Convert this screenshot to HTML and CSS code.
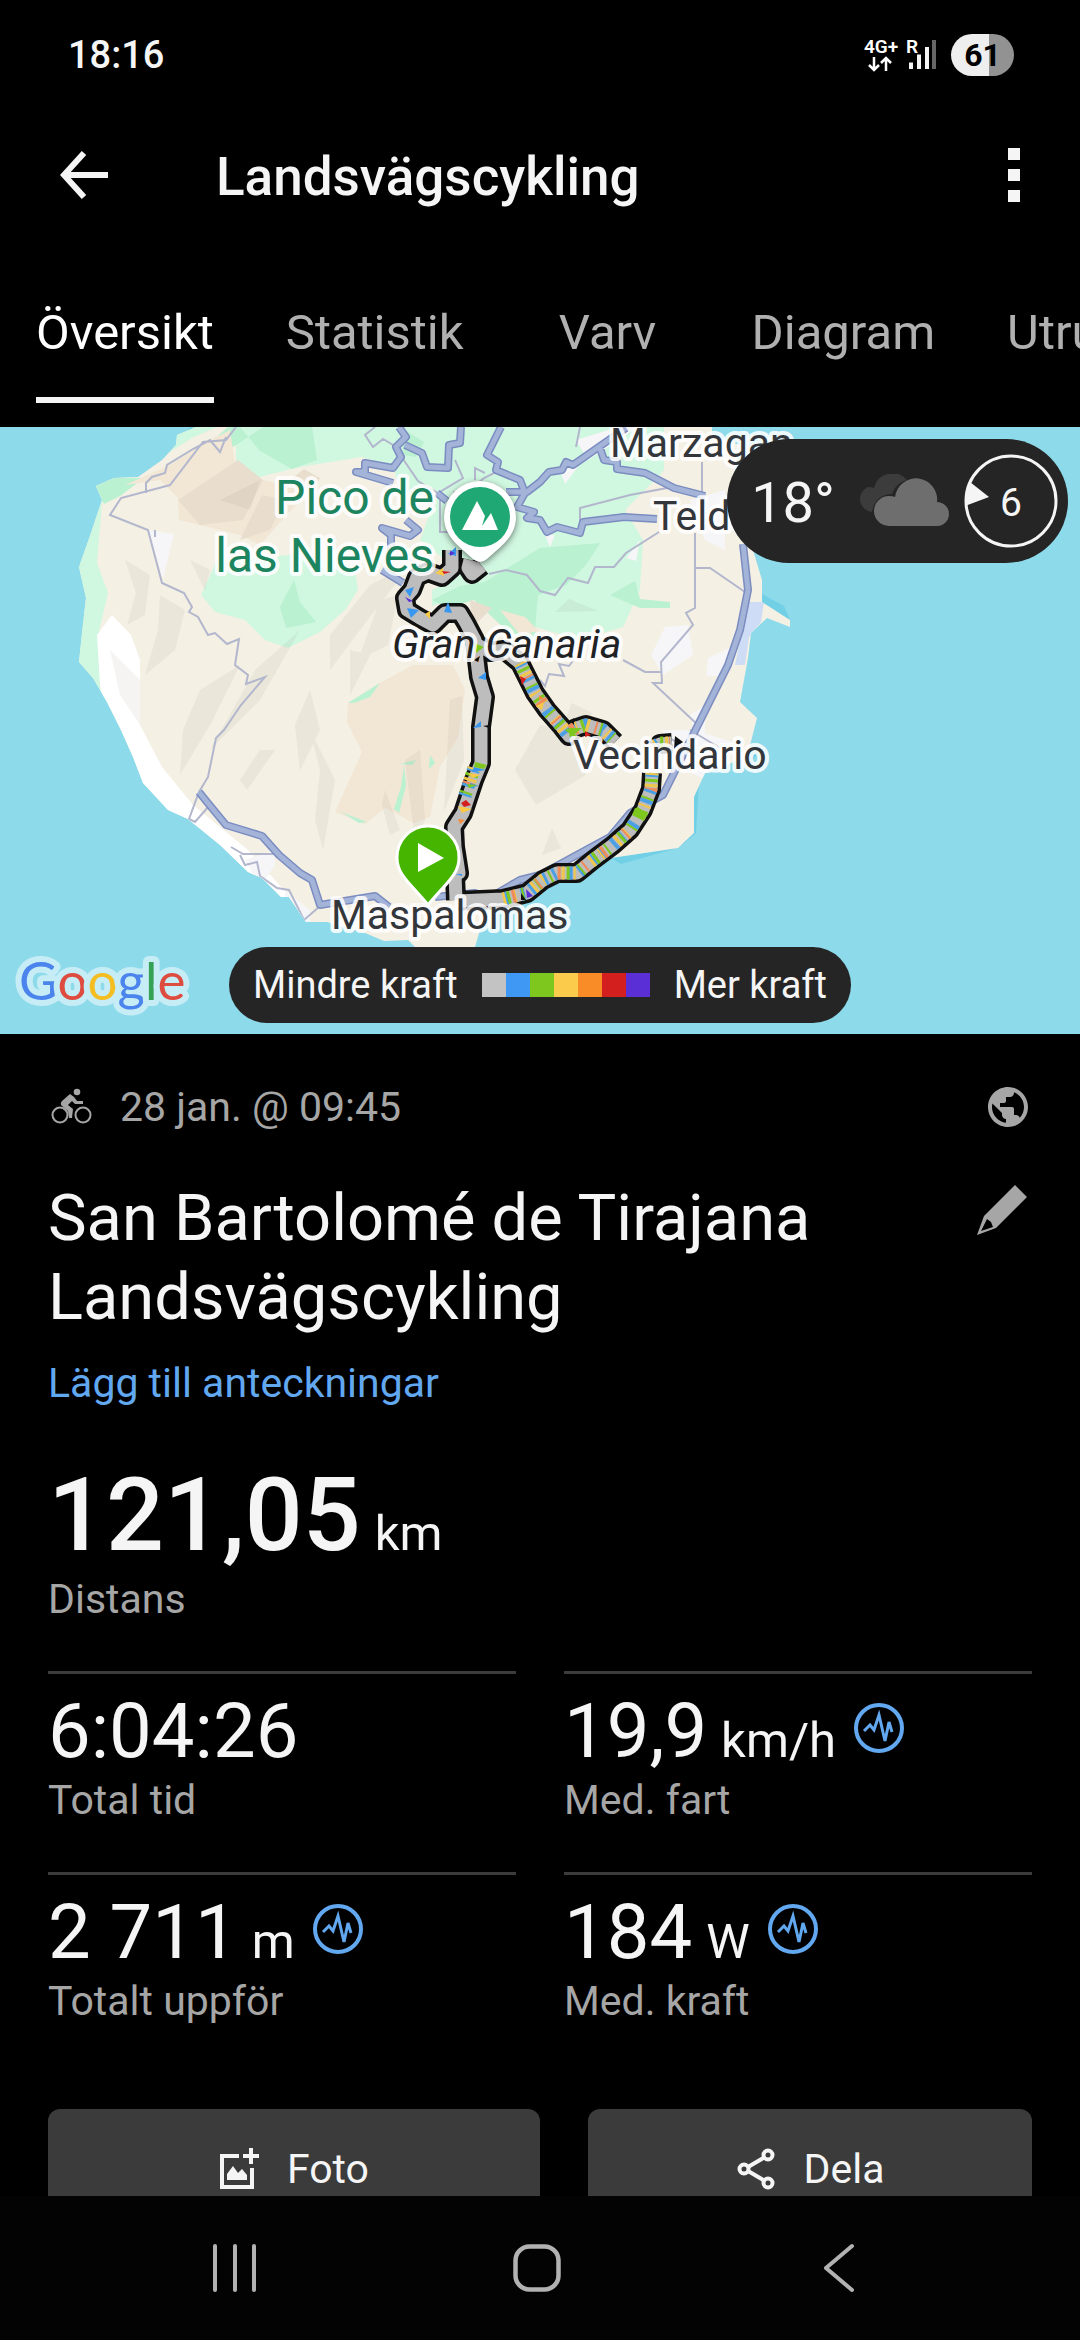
FILE: index.html
```html
<!DOCTYPE html>
<html lang="sv">
<head>
<meta charset="utf-8">
<meta name="viewport" content="width=device-width, initial-scale=1">
<title>Landsvägscykling</title>
<link rel="stylesheet" href="styles.css">
</head>
<body>
<svg class="defs" aria-hidden="true">
  <symbol id="wave" viewBox="0 0 50 50">
    <circle cx="25" cy="25" r="23" fill="none" stroke="currentColor" stroke-width="4"/>
    <path d="M10 28l6-6 4 5 5-15 6 26 4-19 3 10" fill="none" stroke="currentColor" stroke-width="3"/>
  </symbol>
</svg>

<header class="status">
  <time class="clock">18:16</time>
  <div class="indicators">
    <svg width="76" height="42" viewBox="0 0 76 42" role="img" aria-label="4G+ roaming">
      <g class="signal-text"><text x="0" y="19">4G+</text><text x="42" y="19">R</text></g>
      <path d="M10 23v13M5 31l5 5 5-5M22 37v-13M17 29l5-5 5 5" fill="none" stroke="#fff" stroke-width="2.500"/>
      <path d="M47 28.500v6.500M55 20.500v14.500M63 13v22" stroke="#f5f5f5" stroke-width="4"/>
      <path d="M70 6v29" stroke="#666" stroke-width="4"/>
    </svg>
    <span class="battery">61</span>
  </div>
</header>

<div class="appbar">
  <button class="icon-btn" aria-label="Tillbaka">
    <svg width="48" height="48" viewBox="0 0 48 48"><path d="M24 2L4 24l20 22M4 24h44" fill="none" stroke="#f5f5f5" stroke-width="6"/></svg>
  </button>
  <h1>Landsvägscykling</h1>
  <button class="icon-btn" aria-label="Mer">
    <svg width="12" height="54" viewBox="0 0 12 54"><path d="M0 0h12v12H0zM0 21h12v12H0zM0 42h12v12H0z" fill="#f5f5f5"/></svg>
  </button>
</div>

<nav class="tabs">
  <button class="tab active"><span>Översikt</span></button>
  <button class="tab"><span>Statistik</span></button>
  <button class="tab"><span>Varv</span></button>
  <button class="tab"><span>Diagram</span></button>
  <button class="tab"><span>Utrustning</span></button>
</nav>

<main>
  <section class="map">
    <svg class="canvas" viewBox="0 427 1080 607" role="img" aria-label="Karta">
      <defs>
        <clipPath id="land"><path id="coast" d="M196 427L177 435 176 445 162 460 138 477 114 478 96 486 102 500 91 533 79 567 86 598 82 633 79 662 93 678 107 702 121 730 133 757 143 783 168 810 188 819 220 845 248 872 262 878 281 897 289 897 306 922 327 922 365 933 384 941 408 940 415 947 475 947 480 930 490 908 530 897 560 878 611 858 678 848 694 833 694 797 705 773 747 757 757 718 740 702 748 658 751 633 767 618 790 627 790 620 762 602 762 580 753 550 735 470 740 445 712 436 712 427Z"/></clipPath>
      </defs>
      <path fill="#8ddaea" d="M0 427h1080v607H0z"/>
      <path fill="#71cfe6" d="M190 427l-14 20v8l30-20zM79 565l10 32-6 25h10V560zM694 795l5-12-3 50-14 12zM611 858l67-10-57 16zM762 594l22 12 6 14-30-15zM740 758l18-6-5 8z"/>
      <use href="#coast" fill="#f4f0e4"/>
      <g clip-path="url(#land)">
        <path fill="#d0f7e0" d="M170 427l-100 60v180l37 60 0-66-9-25 10-43-11-30 5-60 20-20 30-20 40-25 45-20zM236 427v43l19 8 45-11 61-10 32 9 7 24 35 10-15 40 25 20 15 15-28 15v16l18-6 25-8 30 20 30 15 45 13 43-13 17-37 3-50-18-30 30-30 9-10v-43zM217 560l-16 35 14 17 30 8 20 20 23 8 32-16 25-22 13-20-3-20-25-10-40-5z"/>
        <path fill="#b9f1d1" d="M240 427l20 24 32 18 25-9-5-33zM96 486l18-8 30 0-24 18-16 8zM432 600l28-14 25-4 55-34 60-5-14 22-20 20-28 10-3 35 5 15-34-15-32-30-26 8zM610 595l25-14 5 18 30 3v6l-30 0zM280 607l14-27 6 22 16 20-30 6zM400 427l24 15-8 15-12-2zM213 440l15-13h35l-30 20z"/>
        <path fill="#f2e6d5" d="M125 485l45-20 30-20 30-15 6 40 19 8 38 9 7 13-40 45-20-10-61-15-1-22-18-18zM348 703l32-20 33-18 40 0 12 25-7 47-18 30-10 50-16 6-29-15-20 16-30-12 27-60-15-30zM500 610l25 7 14 14-19 4z"/>
        <path fill="#e9ddcd" d="M178 500l60-40 25 20-20 40-43 5zM262 495l23 5-15 30-30 10zM470 600l22 8-20 20zM290 480l14-11 16 9-7 15z"/>
        <path fill="#b9f1d1" d="M348 703l32-20-10 14-16 6zM400 764l16-4-4 5zM404 765l2 20-7 28-5-4 7-22zM341 812l26 10-8 1zM430 755l5 8-6 6z"/>
        <path fill="#fff" d="M97 635l15-20 19 20 9 25v65l22 42 31 38 55 45 36 40 19 20v15l-90-70-100-90-13-80z"/>
        <path fill="#f6f6f8" d="M148 530l26 4-11 45zM245 860l30-10 0 15-15 22zM285 890l25 20 0 20-25-20zM576 440l42-13h20l-50 33zM560 470l20-6-15 20zM665 627l23-2 5 30-30 20-12-20zM708 658l25-12-7 30-20 0zM690 500l35-10v60l-20-10zM690 715l15-10v30l-10 0zM640 540l-14 18 10 3zM545 535l10 0-5 12zM663 730h30l40 12-20 40-50-20z"/>
        <path fill="#cfdcf5" d="M748 602l16 0-3 20-12 15-4 28h-10z"/>
        <g fill="#7d7468" opacity=".08">
          <path d="M125 560l25 15-5 40-18 10 9-32zM160 595l25 15-10 40-30 25 13-45zM200 690l40-25-30 60-30 50 3-45zM255 670l45-40-40 70-50 50zM310 690l10 40-20 40-5-45zM330 635l40-50 40-20-50 65-30 40zM380 600l18-5-10 50-30 15zM240 780l20-30 15 0-28 40zM310 730l25 50-12 70-8-30 5-50zM385 790l15 40-10 5-8-30zM405 760l15-10 5 70-10 20zM450 700l12-4 2 65-20 50zM515 770l25-45 28 5 18 45-50 30zM542 855l10-27 9 20zM572 703l20 10-6 12-22-3zM555 612l14-13 29 12zM190 560l20 10-5 20zM110 650l30 30 0 45-20-30zM350 650l20 5-20 40zM220 500l40-20-10 30z"/>
        </g>
        <g fill="none" stroke="#b3b7cd" stroke-width="2">
          <path d="M236 427l-10 13-23 2-33 43-49 13-11 17 38 15 14 53 22 10 8 14-3 5 9 5 10 18 7-2 12 11 12-5-4 26 13 10-2 9 19-7-24 28-17 25-8 8-8 39-9 15-10 27 6 3 14-16M146 493v-10l6-6 13-4 2-8 26-16 17-9 10 12 6-15M155 530v7"/>
          <path d="M702 462v31M695 533v75l-9 5 7 12-32 37 1 21h-9l45 42M695 568h15l35 24M659 532l-33 21-12 14h-19l-7 16-20-5-13 17-15-4-13-16-21-5-17 4M623 660l22 12h17M580 523v-15l50-13 37-7M540 680l5 6 4-12 15 2-5-12 10 2 6-8M375 427l-10 8 8 12 10-8 10 6 10 14 15 22 20 12 25-15-8-18M453 492h14l17-14 16-8M475 480v-12l10 5M665 735l40 25M690 730l30 18M231 847l12 7h31M240 855l5 10 12-3 3 14 17 12 12 2 15 30 15-13M440 500v32l12 0M580 427l-4 20"/>
        </g>
        <g class="roads">
          <path id="majors" d="M199 792l8 10 19 23 36 11 17 19 21 18 12 7 8 25 55-9 14 11M435 897l40-4 14 5 31-18 20-5 70-38 20-24 33-18 34-68 31-62 12-35 8-40-5-46M399 427l7 10-10 10 5 10-8 11-28-5v9h-9l37 11M405 445l17 8 5 14 21 1 1-23 11-2 1-16M501 427l-14 28 11 7-2 8 24 10 5 13-8 14 17 5-7 6 13 2 7 12 10-5 23 6 3-11 41-5 33 2M506 492h21l13-10 9-10 13-2 4-8 7 3 53-37M599 445l5 15 13 2v7l28 4 29 15 31 8M406 520l12 10-8 6-28-8 9 7v15M382 570l21 13M437 493l10 8"/>
          <use href="#majors" class="road-fill"/>
        </g>
      </g>

      <defs>
        <path id="legs" d="M456 900l-1-25 4-2-4-26-1-20 9-14 11-33 7-17V727l4-30-6-20-2-17-2-20-9-17-6-10-15 0-12 12-13-7-13-8-2-12 7-8 5-13 11-5 14 5 10-9v-18M470 560l-2 8 4 6 10-8M478 645l12 7 14-2 16 13 7 14 8 16 12 17 15 17 7 9 5-7 12-4 17 5 12 12M657 748l3-4 12-1M652 773l-1 16-8 21-13 20-17 15-20 15-16 13h-20l-14 7-16 13-24 6-45 2"/>
        <path id="efforts" d="M652 773l-1 16-8 21-13 20-17 15-20 15-16 13h-20l-14 7-16 13-24 6M520 663l7 14 8 16 12 17 15 17 7 9 5-7 12-4 17 5 9 8M474 768l-9 28M655 746l5-3 10 0"/>
      </defs>
      <g class="route">
        <use href="#legs" class="edge"/>
        <use href="#legs" class="core"/>
        <use href="#efforts" stroke="#4b9fe4" stroke-dasharray="4 13 3 7"/>
        <use href="#efforts" stroke="#7dc71f" stroke-dasharray="3 16 2 12" stroke-dashoffset="-6"/>
        <use href="#efforts" stroke="#f1c64a" stroke-dasharray="3 19 2 9" stroke-dashoffset="-11"/>
        <use href="#efforts" stroke="#f08b5a" stroke-dasharray="2 26 3 21" stroke-dashoffset="-15"/>
        <path fill="#3a97ef" d="M473 728l8-7v6zM478 678l8-6v8zM407 608l12 2-8 8zM444 612l4-10 4 11zM405 590l9-3-4 10zM448 554l8-7v9zM474 767l12 3-14 2zM470 783l9 3-9 1zM455 874h7v2z"/>
        <path fill="#7dc71f" d="M475 762l12 3-3 4-10-2zM467 784l10 1-8 3zM474 643l10 4-8 6zM568 728l14 0-12 10zM635 808l13 4-4 9-12-6z"/>
        <path fill="#f9c946" d="M468 773l13 2-9 3zM458 806l14 3-10 4zM435 573l8-5 1 8zM425 614l5-3 0 8zM536 706l8-4-2 8z"/>
        <path fill="#d3201f" d="M461 803l5-3 5 5-7 2zM442 571l9 1-7 2zM520 676l6 3-4 6zM585 731l6 4-6 2z"/>
        <path fill="#5a2fd6" d="M450 551l5 2-5 3zM405 597l8 4-4 1zM526 889l7 7-6 2z"/>
        <path fill="#f68b3a" d="M474 660l5-4v6zM458 819l7 1-5 4zM539 695l5 4-5 1z"/>
        <path fill="#111" d="M483 726l6-1v3zM521 893l5 7h-5zM675 736l8 6-9 7zM570 721l4-3v7zM474 660l6-4-2 6z"/>
      </g>

      <g class="labels">
        <text x="610" y="457">Marzagan</text>
        <text x="653" y="530">Telde</text>
        <text x="573" y="769">Vecindario</text>
        <text x="331" y="929">Maspalomas</text>
        <text x="392" y="658" class="region">Gran Canaria</text>
        <g class="peak"><text x="434" y="514">Pico de</text><text x="434" y="572">las Nieves</text></g>
      </g>

      <path class="pin-shadow" d="M480 481a36 36 0 0 1 36 36c0 14-8 24-20 34l-9 8q-7 6-14 0l-9-8c-12-10-20-20-20-34a36 36 0 0 1 36-36z" fill="#fff"/>
      <circle cx="480" cy="517" r="30" fill="#1fa873"/>
      <path fill="#fff" d="M462 530l15-29 8 15-3 10 9-13 7 17z"/>

      <path fill="#45b500" stroke="#fff" stroke-width="3" d="M428 826a31 31 0 0 1 31 32c0 17-14 26-31 47-17-21-31-30-31-47a31 31 0 0 1 31-32z"/>
      <path fill="#fff" d="M418 843l26 15-26 14z"/>
    </svg>

    <div class="google"><svg width="200" height="80" viewBox="0 0 200 80"><text x="10" y="52"><tspan fill="#4a84ec">G</tspan><tspan fill="#de4b3f">o</tspan><tspan fill="#f4bd22">o</tspan><tspan fill="#4a84ec">g</tspan><tspan fill="#35a155">l</tspan><tspan fill="#de4b3f">e</tspan></text></svg></div>

    <div class="weather">
      <span class="temp">18°</span>
      <svg width="95" height="54" viewBox="0 0 95 54" role="img" aria-label="Molnigt">
        <path fill="#3c3c3c" d="M13 13q4 0 6 1a19 19 0 0 1 33-8c-8 2-13 8-15 14-10 0-18 6-20 18a13 13 0 0 1-4-25z"/>
        <path fill="#6e6e6e" d="M34 52a15 15 0 0 1 0-30q4 0 6 1a21 21 0 0 1 42 5 12 12 0 0 1 0 24z"/>
      </svg>
      <svg width="96" height="96" class="wind" viewBox="0 0 96 96" role="img" aria-label="Vind 6">
        <circle cx="49" cy="48" r="45" fill="none" stroke="#f5f5f5" stroke-width="3"/>
        <path fill="#f5f5f5" d="M3 53l5-24 19 15z"/>
        <text x="49" y="63" text-anchor="middle">6</text>
      </svg>
    </div>

    <div class="legend">
      <span>Mindre kraft</span>
      <div class="scale"><i class="c1"></i><i class="c2"></i><i class="c3"></i><i class="c4"></i><i class="c5"></i><i class="c6"></i><i class="c7"></i></div>
      <span>Mer kraft</span>
    </div>
  </section>

  <section class="info">
    <div class="meta">
      <svg class="bike" width="42" height="38" viewBox="0 0 42 38" aria-hidden="true" fill="none" stroke="#a6a6a6">
        <circle cx="9" cy="27" r="7.500" stroke-width="2"/><circle cx="32" cy="27" r="7.500" stroke-width="2"/>
        <circle cx="26" cy="4" r="3.300" fill="#a6a6a6" stroke="none"/>
        <path fill="#a6a6a6" stroke="none" d="M19 6l4 3 3 4h6v3h-8l-3-3-4 4 5 4-1 9h-3l-1-7-7-6q-1-2 1-4z"/>
      </svg>
      <time>28 jan. @ 09:45</time>
      <svg class="globe" width="48" height="48" viewBox="0 0 24 24" role="img" aria-label="Offentlig"><path fill="#a6a6a6" d="M12 2C6.480 2 2 6.480 2 12s4.480 10 10 10 10-4.480 10-10S17.520 2 12 2zm-1 17.930c-3.950-.49-7-3.850-7-7.930 0-.62.080-1.210.21-1.790L9 15v1c0 1.100.9 2 2 2v1.930zm6.900-2.540c-.26-.81-1-1.390-1.900-1.390h-1v-3c0-.55-.45-1-1-1H8v-2h2c.55 0 1-.45 1-1V7h2c1.100 0 2-.9 2-2v-.41c2.930 1.190 5 4.060 5 7.410 0 2.080-.8 3.970-2.100 5.390z"/></svg>
    </div>
    <div class="heading">
      <h2>San Bartolomé de Tirajana Landsvägscykling</h2>
      <button class="icon-btn" aria-label="Redigera">
        <svg width="50" height="50" viewBox="0 0 50 50"><path fill="#a6a6a6" fill-rule="evenodd" d="M38 0l12 12-31 31-19 7 7-19zM10 34l-6 12 12-4-2-5z"/></svg>
      </button>
    </div>
    <a class="notes" href="#anteckningar">Lägg till anteckningar</a>

    <div class="distance">
      <div class="value"><strong>121,05</strong><span class="unit">km</span></div>
      <div class="label">Distans</div>
    </div>

    <div class="stats">
      <div class="stat"><div class="value">6:04:26</div><div class="label">Total tid</div></div>
      <div class="stat"><div class="value">19,9<span class="unit">km/h</span><svg class="wave"><use href="#wave"/></svg></div><div class="label">Med. fart</div></div>
      <div class="stat"><div class="value">2 711<span class="unit">m</span><svg class="wave"><use href="#wave"/></svg></div><div class="label">Totalt uppför</div></div>
      <div class="stat"><div class="value">184<span class="unit">W</span><svg class="wave"><use href="#wave"/></svg></div><div class="label">Med. kraft</div></div>
    </div>
  </section>

  <div class="actions">
    <div><button class="action">
      <svg width="42" height="42" viewBox="0 0 42 42" aria-hidden="true"><path d="M20 8H3v31h30V20" fill="none" stroke="#f5f5f5" stroke-width="4"/><path d="M32 0v16M24 8h16" stroke="#f5f5f5" stroke-width="4"/><path fill="#f5f5f5" d="M8 32v-6l6-8 5 7 4-4 5 6v5z"/></svg>
      <span>Foto</span></button></div>
    <div><button class="action">
      <svg width="42" height="42" viewBox="0 0 42 42" aria-hidden="true" fill="none" stroke="#f5f5f5" stroke-width="4"><path d="M12 19L29 9M12 23l17 10"/><circle cx="8" cy="21" r="4.500"/><circle cx="32" cy="7" r="4.500"/><circle cx="32" cy="35" r="4.500"/></svg>
      <span>Dela</span></button></div>
  </div>
</main>

<nav class="sysnav">
  <button aria-label="Senaste"><svg width="48" height="50" viewBox="0 0 48 50"><path d="M4 3v44M24 3v44M43 3v44" stroke="#b2b2b2" stroke-width="4" stroke-linecap="round"/></svg></button>
  <button aria-label="Hem"><svg width="50" height="50" viewBox="0 0 50 50"><rect x="3.500" y="3.500" width="43" height="43" rx="14" fill="none" stroke="#b2b2b2" stroke-width="4.500"/></svg></button>
  <button aria-label="Bakåt"><svg width="34" height="50" viewBox="0 0 34 50"><path d="M30 3L4 25l26 22" fill="none" stroke="#b2b2b2" stroke-width="4" stroke-linecap="round" stroke-linejoin="round"/></svg></button>
</nav>
</body>
</html>
```
FILE: styles.css
```css
* { box-sizing: border-box; }
body {
  margin: 0;
  height: 100vh;
  display: flex;
  flex-direction: column;
  overflow: hidden;
  background: #000;
  color: #f5f5f5;
  font-family: Roboto, "Noto Sans", sans-serif;
  font-size: 41px;
  line-height: 48px;
}
h1, h2 { margin: 0; font-weight: 400; }
button {
  border: 0;
  padding: 0;
  background: none;
  color: inherit;
  font: inherit;
}
svg { display: block; flex: none; }
.defs { position: absolute; width: 0; height: 0; }

.status {
  flex: none;
  height: 110px;
  padding: 0 66px 0 68px;
  display: flex;
  align-items: center;
  justify-content: space-between;
}
.clock { font-size: 38px; font-weight: 500; }
.indicators { display: flex; align-items: center; gap: 11px; }
.signal-text { font-size: 19px; font-weight: 600; fill: #fff; }
.battery {
  width: 63px;
  height: 42px;
  border-radius: 21px;
  background: linear-gradient(90deg, #eee 60%, #929292 60%);
  color: #000;
  font-size: 32px;
  line-height: 42px;
  font-weight: 700;
  text-align: center;
}

.appbar {
  flex: none;
  height: 130px;
  padding: 0 60px;
  display: flex;
  align-items: center;
}
.appbar h1 {
  flex: 1;
  margin-left: 108px;
  padding-top: 4px;
  font-size: 53px;
  line-height: 60px;
  font-weight: 500;
}

.tabs {
  flex: none;
  height: 187px;
  padding-bottom: 24px;
  display: flex;
  overflow: hidden;
}
.tab {
  flex: none;
  min-width: 216px;
  padding: 0 36px;
  color: #b0b0b0;
  font-size: 49px;
  line-height: 56px;
}
.tab span {
  display: flex;
  align-items: center;
  justify-content: center;
  height: 100%;
  padding-top: 28px;
  border-bottom: 6px solid transparent;
}
.tab.active { color: #fff; }
.tab.active span { border-color: #f5f5f5; }

main { flex: 1; min-height: 0; overflow: hidden; }

.map { position: relative; overflow: hidden; }
.canvas { width: 100%; height: auto; }
.roads { fill: none; stroke: #7b8cc0; stroke-width: 8; stroke-linejoin: round; }
.road-fill { stroke: #a3b4d8; stroke-width: 5; }
.route use { fill: none; stroke-width: 13; stroke-linejoin: round; }
.route .edge { stroke: #111; stroke-width: 20; }
.route .core { stroke: #bdbdbd; }
.labels text {
  font-size: 41px;
  fill: #33373c;
  stroke: #fff;
  stroke-opacity: .85;
  stroke-width: 8px;
  stroke-linejoin: round;
  paint-order: stroke;
}
.labels .region { font-style: italic; fill: #202226; }
.labels .peak text { font-size: 48px; fill: #1c8560; text-anchor: end; }
.pin-shadow { filter: drop-shadow(0 2px 3px rgba(0, 0, 0, .5)); }

.google { position: absolute; left: 9px; bottom: 6px; }
.google text {
  font-family: Lato, sans-serif;
  font-size: 53px;
  stroke: #c6ecf5;
  stroke-width: 12px;
  stroke-linejoin: round;
  paint-order: stroke;
}

.weather {
  position: absolute;
  top: 12px;
  right: 12px;
  height: 124px;
  padding: 0 10px 0 24px;
  border-radius: 62px;
  background: #252525;
  display: flex;
  align-items: center;
  gap: 12px;
}
.temp { font-size: 56px; line-height: 64px; padding-top: 4px; margin-right: 8px; }
.wind text { font-size: 39px; fill: #f5f5f5; }

.legend {
  position: absolute;
  bottom: 11px;
  left: 50%;
  transform: translateX(-50%);
  height: 76px;
  padding: 0 24px;
  border-radius: 38px;
  background: #252525;
  display: flex;
  align-items: center;
  gap: 24px;
  font-size: 38px;
  white-space: nowrap;
}
.scale { display: flex; }
.scale i { width: 24px; height: 24px; }
.c1 { background: #c3c3c3; }
.c2 { background: #3f98f3; }
.c3 { background: #7dc71f; }
.c4 { background: #fbcb4b; }
.c5 { background: #f98c26; }
.c6 { background: #d3201f; }
.c7 { background: #5a2fd6; }

.info { padding: 48px 48px 0; }
.meta { display: flex; align-items: center; height: 50px; color: #a6a6a6; }
.bike { margin-left: 3px; }
.meta time { margin-left: 27px; }
.globe { margin-left: auto; }
.heading {
  margin-top: 47px;
  padding-right: 5px;
  display: flex;
  align-items: flex-start;
  justify-content: space-between;
}
.heading h2 { max-width: 820px; font-size: 65px; line-height: 79px; }
.heading .icon-btn { margin-top: 6px; }
.notes { display: block; margin-top: 22px; color: #62a8f0; text-decoration: none; }
.value { display: flex; align-items: baseline; gap: 14px; white-space: nowrap; }
.unit { font-size: 49px; line-height: 56px; }
.label { color: #a6a6a6; }
.distance { margin-top: 48px; }
.distance .value { height: 120px; }
.distance strong { font-size: 102px; line-height: 120px; font-weight: 500; }
.stats {
  margin-top: 48px;
  display: grid;
  grid-template-columns: 1fr 1fr;
  gap: 48px;
}
.stat { padding-top: 12px; border-top: 3px solid #3c3c3c; }
.stat .value { height: 90px; font-size: 76px; line-height: 90px; }
.wave {
  width: 50px;
  height: 50px;
  align-self: center;
  margin: 0 0 6px 4px;
  color: #62a8f0;
}

.actions {
  margin-top: 84px;
  display: grid;
  grid-template-columns: 1fr 1fr;
}
.actions > div { padding-left: 48px; }
.actions > div:last-child { padding-right: 48px; }
.action {
  width: 100%;
  height: 120px;
  border-radius: 12px;
  background: #3b3b3b;
  display: flex;
  align-items: center;
  justify-content: center;
  gap: 26px;
}

.sysnav {
  flex: none;
  height: 144px;
  padding: 0 90px 0 84px;
  background: #030303;
  display: grid;
  grid-template-columns: repeat(3, 1fr);
}
.sysnav button { display: flex; align-items: center; justify-content: center; }
```
